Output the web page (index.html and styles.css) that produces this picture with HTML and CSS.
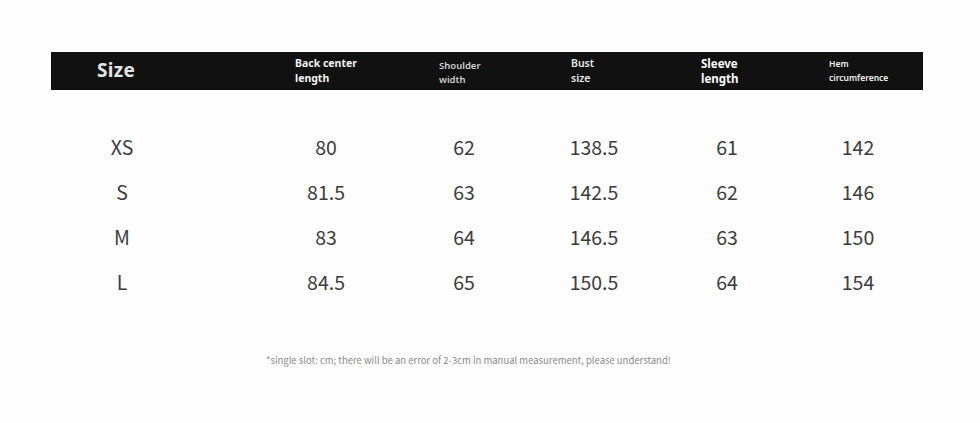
FILE: index.html
```html
<!DOCTYPE html>
<html lang="en">
<head>
<meta charset="utf-8">
<title>Size chart</title>
<link rel="stylesheet" href="styles.css">
</head>
<body>
<main class="chart">
  <div class="head">
    <div class="h h-size">Size</div>
    <div class="h h-back">Back center<br>length</div>
    <div class="h h-shoulder">Shoulder<br>width</div>
    <div class="h h-bust">Bust<br>size</div>
    <div class="h h-sleeve">Sleeve<br>length</div>
    <div class="h h-hem">Hem<br>circumference</div>
  </div>
  <div class="rows">
    <div class="row"><span class="c">XS</span><span class="c">80</span><span class="c">62</span><span class="c">138.5</span><span class="c">61</span><span class="c">142</span></div>
    <div class="row"><span class="c">S</span><span class="c">81.5</span><span class="c">63</span><span class="c">142.5</span><span class="c">62</span><span class="c">146</span></div>
    <div class="row"><span class="c">M</span><span class="c">83</span><span class="c">64</span><span class="c">146.5</span><span class="c">63</span><span class="c">150</span></div>
    <div class="row"><span class="c">L</span><span class="c">84.5</span><span class="c">65</span><span class="c">150.5</span><span class="c">64</span><span class="c">154</span></div>
  </div>
  <p class="note">*single slot: cm; there will be an error of 2-3cm in manual measurement, please understand!</p>
</main>
</body>
</html>
```
FILE: styles.css
```css
html, body {
  margin: 0;
  padding: 0;
  background: #fefefe;
}
body {
  width: 980px;
  height: 423px;
  overflow: hidden;
  font-family: "Noto Sans CJK SC", "Noto Sans", sans-serif;
}
.chart {
  padding-top: 52px;
}
.head {
  margin-left: 51px;
  width: 872px;
  height: 38px;
  background: #111111;
  display: grid;
  grid-template-columns: 198px 144px 132px 130px 128px 1fr;
  padding-left: 46px;
  box-sizing: border-box;
  align-items: center;
  color: #f2f2f2;
}
.h {
  font-family: "Noto Sans", "Open Sans", sans-serif;
  font-weight: 700;
  font-size: 10.5px;
  line-height: 15px;
  white-space: nowrap;
}
.h-size {
  font-size: 19px;
  line-height: 20px;
  color: #e4e4e4;
  letter-spacing: 0.3px;
  padding-bottom: 2px;
}
.h-shoulder {
  font-size: 9.5px;
  line-height: 14px;
  color: #cfcfcf;
  font-weight: 600;
  padding-top: 3px;
}
.h-bust {
  font-weight: 600;
  color: #e8e8e8;
}
.h-sleeve {
  font-size: 11.5px;
  line-height: 15px;
  color: #fafafa;
}
.h-hem {
  font-size: 8.5px;
  line-height: 14px;
  font-weight: 600;
  color: #f0f0f0;
}
.rows {
  padding-top: 34px;
}
.row {
  display: grid;
  grid-template-columns: 204px 138px 130px 133px 131px 1fr;
  padding-left: 122px;
  height: 45px;
  align-items: center;
}
.c {
  width: 0;
  display: flex;
  justify-content: center;
  white-space: nowrap;
  font-size: 19.5px;
  color: #3c3c3c;
}
.note {
  margin: 49px 0 0 266px;
  font-size: 9.5px;
  color: #8a8a8a;
  white-space: nowrap;
}
```
